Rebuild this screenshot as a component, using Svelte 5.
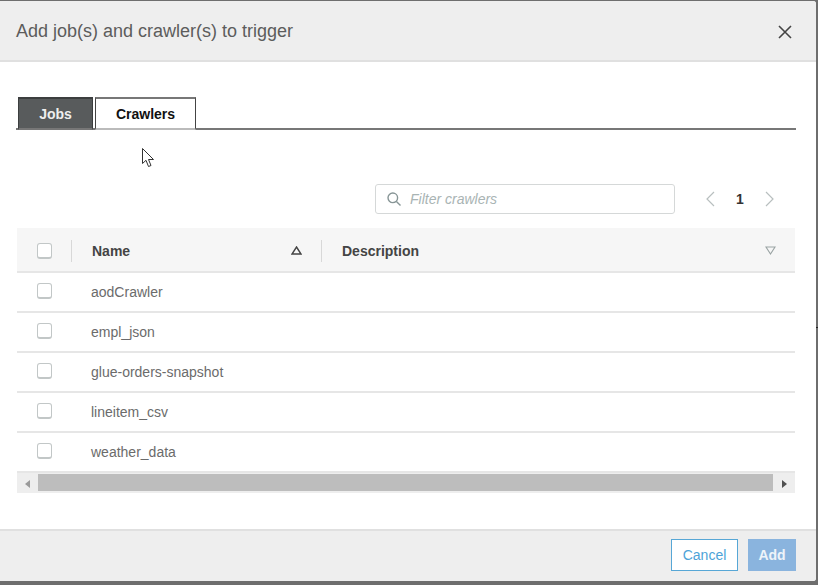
<script lang="ts">
	const crawlers = ['aodCrawler', 'empl_json', 'glue-orders-snapshot', 'lineitem_csv', 'weather_data'];
</script>

<div class="modal">
	<header class="head">
		<h2>Add job(s) and crawler(s) to trigger</h2>
		<svg class="close" viewBox="0 0 14 14" width="14" height="14">
			<path d="M1 1 L13 13 M13 1 L1 13" />
		</svg>
	</header>

	<div class="body">
		<div class="tabs">
			<div class="tab active">Jobs</div>
			<div class="tab">Crawlers</div>
		</div>

		<div class="toolbar">
			<div class="filter">
				<svg viewBox="0 0 16 16" width="16" height="16">
					<circle cx="6.8" cy="6.8" r="4.8" />
					<path d="M10.4 10.4 L14.5 14.5" />
				</svg>
				<span>Filter crawlers</span>
			</div>
			<div class="pager">
				<svg viewBox="0 0 10 16" width="10" height="16"><path d="M9 1 L2 8 L9 15" /></svg>
				<b>1</b>
				<svg viewBox="0 0 10 16" width="10" height="16"><path d="M1 1 L8 8 L1 15" /></svg>
			</div>
		</div>

		<div class="table">
			<div class="row th">
				<div class="check"><i class="box"></i></div>
				<div class="name">
					<span>Name</span>
					<svg viewBox="0 0 11 9" width="11" height="9"><path class="sort" d="M5.5 1 L10 8 L1 8 Z" /></svg>
				</div>
				<div class="desc">
					<span>Description</span>
					<svg viewBox="0 0 11 9" width="11" height="9"><path class="sort off" d="M1 1 L10 1 L5.5 8 Z" /></svg>
				</div>
			</div>
			{#each crawlers as c}
				<div class="row">
					<div class="check"><i class="box"></i></div>
					<div class="cell">{c}</div>
				</div>
			{/each}
			<div class="scroll">
				<svg viewBox="0 0 5 8" width="5" height="8"><path d="M5 0 L0 4 L5 8 Z" fill="#9a9a9a" /></svg>
				<div class="thumb"></div>
				<svg viewBox="0 0 5 8" width="5" height="8"><path d="M0 0 L5 4 L0 8 Z" fill="#505050" /></svg>
			</div>
		</div>
	</div>

	<footer class="foot">
		<button class="cancel">Cancel</button>
		<button class="add">Add</button>
	</footer>

	<!-- mouse pointer caught in the capture -->
	<svg class="cursor" viewBox="0 0 13 20" width="13" height="20">
		<path d="M0.5 0.5 L0.5 15.5 L4 12.3 L6.5 18.5 L9 17.5 L6.5 11.5 L11.5 11.5 Z" />
	</svg>
</div>

<style>
	:global(body) {
		margin: 0;
		background: linear-gradient(#222, #222) 0 327px / 100% 1px no-repeat, #6e6e6e;
	}

	.modal {
		position: relative;
		box-sizing: border-box;
		width: 816px;
		height: 580px;
		margin-top: 1px;
		background: #fff;
		display: flex;
		flex-direction: column;
		font-family: 'Liberation Sans', Arial, sans-serif;
		border-radius: 0 3px 3px 0;
		overflow: hidden;
	}

	.head {
		flex: none;
		box-sizing: border-box;
		height: 61px;
		background: #eeeeee;
		border-bottom: 2px solid #e0e0e0;
		display: flex;
		align-items: center;
		justify-content: space-between;
		padding: 0 24px 0 16px;
	}

	h2 {
		margin: 2px 0 0;
		font-size: 18px;
		font-weight: 400;
		color: #5c5c5c;
	}

	.close {
		margin-top: 3px;
	}

	.close path {
		stroke: #444;
		stroke-width: 1.6;
		fill: none;
	}

	.body {
		flex: 1;
		padding: 35px 20px 0 16px;
	}

	.tabs {
		display: flex;
		gap: 2px;
		height: 33px;
		box-sizing: border-box;
		padding-left: 2px;
		border-bottom: 2px solid #777;
	}

	.tab {
		box-sizing: border-box;
		flex: none;
		width: 101px;
		height: 33px;
		border: 1px solid #444;
		border-top: 2px solid #777;
		border-bottom: 2px solid #bbb;
		background: #fff;
		color: #111;
		font-size: 14px;
		font-weight: 700;
		text-align: center;
		line-height: 31px;
	}

	.tab.active {
		width: 75px;
		background: #585b5c;
		color: #eee;
		border-color: #3c3e3f;
		border-bottom-color: #777;
	}

	.toolbar {
		display: flex;
		justify-content: flex-end;
		align-items: center;
		margin-top: 54px;
		height: 30px;
	}

	.filter {
		box-sizing: border-box;
		width: 300px;
		height: 30px;
		border: 1px solid #d5d8d8;
		border-radius: 3px;
		display: flex;
		align-items: center;
		gap: 8px;
		padding-left: 10px;
		color: #a9b4b4;
		font-size: 14px;
		font-style: italic;
	}

	.filter svg {
		fill: none;
		stroke: #879596;
		stroke-width: 1.4;
	}

	.pager {
		width: 121px;
		box-sizing: border-box;
		display: flex;
		align-items: center;
		justify-content: space-between;
		padding: 0 21px 0 30px;
	}

	.pager svg path {
		fill: none;
		stroke: #b8bfbf;
		stroke-width: 1.2;
	}

	.pager b {
		font-size: 14px;
		color: #333;
	}

	.table {
		margin: 14px 1px 0;
	}

	.row {
		box-sizing: border-box;
		height: 40px;
		display: flex;
		align-items: center;
		border-bottom: 2px solid #e6e6e6;
	}

	.row.th {
		height: 45px;
		padding-top: 2px;
		background: #f6f6f6;
		color: #444;
		font-size: 14px;
		font-weight: 700;
	}

	.check {
		width: 55px;
		flex: none;
		padding-left: 20px;
		box-sizing: border-box;
		height: 22px;
		margin-bottom: 2px;
		display: flex;
		align-items: center;
	}

	.th .check {
		margin-bottom: 0;
		border-right: 1px solid #d8d8d8;
	}

	.box {
		display: block;
		box-sizing: border-box;
		width: 15px;
		height: 16px;
		border: 1px solid #c2c7c7;
		border-bottom-width: 2px;
		border-radius: 3px;
		background: #fff;
	}

	.name,
	.desc {
		box-sizing: border-box;
		height: 22px;
		display: flex;
		align-items: center;
		justify-content: space-between;
		line-height: 20px;
	}

	.name {
		width: 250px;
		padding: 0 19px 0 20px;
		border-right: 1px solid #d8d8d8;
	}

	.desc {
		flex: 1;
		padding: 0 19px 0 20px;
	}

	.sort {
		fill: none;
		stroke: #444;
		stroke-width: 1.4;
	}

	.sort.off {
		stroke: #9aa3a3;
		stroke-width: 1.1;
	}

	.cell {
		padding-left: 19px;
		font-size: 14px;
		color: #6b6b6b;
	}

	.scroll {
		height: 20px;
		background: #eeeeee;
		display: flex;
		align-items: center;
		gap: 8px;
		padding: 1px 8px 0;
		box-sizing: border-box;
	}

	.thumb {
		flex: 1;
		height: 17px;
		margin: 0 1px 2px 0;
		background: #bdbdbd;
	}

	.foot {
		flex: none;
		box-sizing: border-box;
		height: 52px;
		background: #eeeeee;
		border-top: 2px solid #e0e0e0;
		display: flex;
		justify-content: flex-end;
		align-items: flex-start;
		gap: 10px;
		padding: 8px 20px 0 0;
	}

	button {
		box-sizing: border-box;
		height: 32px;
		font-family: inherit;
		font-size: 14px;
		padding: 0;
	}

	.cancel {
		width: 67px;
		background: #fff;
		border: 1px solid #57a7d6;
		color: #4da3d8;
	}

	.add {
		width: 48px;
		background: #8ab4de;
		border: none;
		color: #eef4fa;
		font-weight: 700;
	}

	.cursor {
		position: absolute;
		left: 142px;
		top: 147px;
	}

	.cursor path {
		fill: #fff;
		stroke: #333;
		stroke-width: 1;
	}
</style>
